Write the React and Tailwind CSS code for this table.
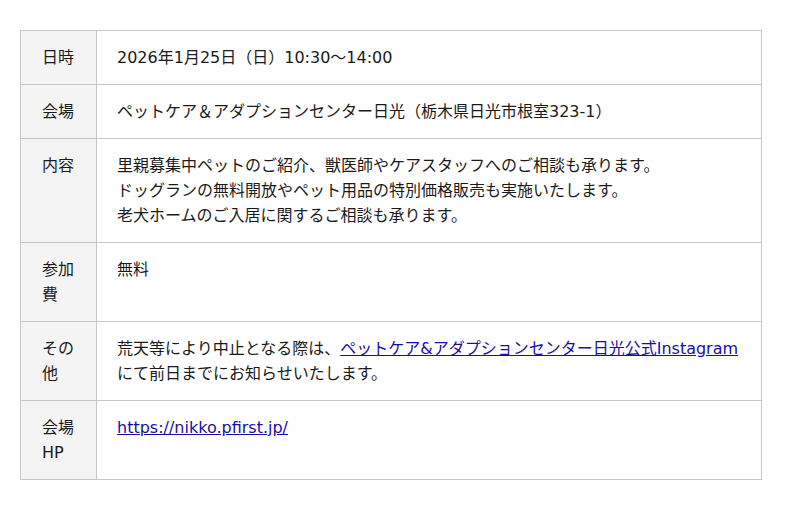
const rows = [
  { label: "日時", body: <>2026年1月25日（日）10:30〜14:00</> },
  {
    label: "会場",
    body: <>ペットケア＆アダプションセンター日光（栃木県日光市根室323-1）</>,
  },
  {
    label: "内容",
    body: (
      <>
        里親募集中ペットのご紹介、獣医師やケアスタッフへのご相談も承ります。
        <br />
        ドッグランの無料開放やペット用品の特別価格販売も実施いたします。
        <br />
        老犬ホームのご入居に関するご相談も承ります。
      </>
    ),
  },
  { label: "参加費", body: <>無料</> },
  {
    label: "その他",
    body: (
      <>
        荒天等により中止となる際は、
        <a href="#" className="text-[#1a0dab] underline">
          ペットケア&amp;アダプションセンター日光公式Instagram
        </a>
        にて前日までにお知らせいたします。
      </>
    ),
  },
  {
    label: "会場HP",
    body: (
      <a href="#" className="text-[#1a0dab] underline">
        https://nikko.pfirst.jp/
      </a>
    ),
  },
];

export default function App() {
  return (
    <div
      className="w-[800px] h-[510px] bg-white pt-[30px] pl-[20px] text-[#1a1a1a] text-[16px] leading-[25px]"
      style={{ fontFamily: '"DejaVu Sans", "Noto Sans CJK JP", sans-serif' }}
    >
      <table className="w-[742px] border-collapse">
        <tbody>
          {rows.map((row) => (
            <tr key={row.label}>
              <th className="w-[76px] border border-[#c8c8c8] bg-[#f4f4f4] px-[21px] py-[14px] text-left align-top font-normal">
                {row.label}
              </th>
              <td className="border border-[#c8c8c8] px-[20px] py-[14px] align-top">
                {row.body}
              </td>
            </tr>
          ))}
        </tbody>
      </table>
    </div>
  );
}
